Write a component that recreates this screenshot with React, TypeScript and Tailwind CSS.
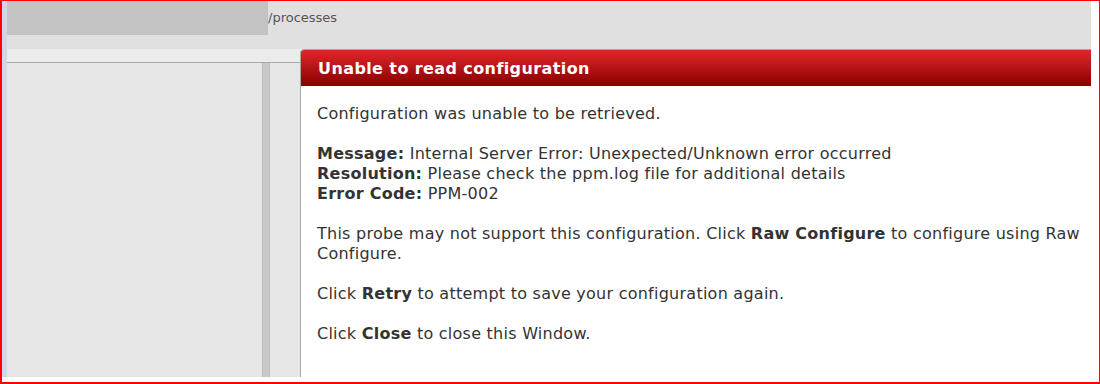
export default function App() {
  const font = { fontFamily: '"DejaVu Sans", Verdana, sans-serif' };

  return (
    <div className="w-[1100px] h-[384px] border-t border-l-2 border-r border-b-2 border-[#ff0000] bg-white" style={font}>
      <div className="flex h-[376px] w-[1089px]">
        <div className="w-[5px] shrink-0 bg-[#cdd7e6]" />
        <div className="flex flex-1 flex-col">
          <div className="flex h-[48px] shrink-0 items-start bg-[#e0e0e0]">
            <div className="h-[34px] w-[261px] bg-[#c3c3c3]" />
            <span className="mt-[9px] text-[13px] leading-[16px] text-[#555]">/processes</span>
          </div>
          <div className="flex flex-1">
            <div className="flex w-[293px] shrink-0 flex-col bg-[#ebebeb]">
              <div className="h-[13px] shrink-0" />
              <div className="flex flex-1 border-t border-[#a9a9a9]">
                <div className="w-[255px] bg-[#e6e6e6]" />
                <div className="w-[8px] border-x border-[#bdbdbd] bg-[#c9c9c9]" />
                <div className="flex-1 bg-[#e6e6e6]" />
              </div>
            </div>
            <div className="flex flex-1 flex-col overflow-hidden rounded-tl-[4px] border-t border-l border-[#a8a8a8] bg-white">
              <div className="flex h-[36px] shrink-0 items-center bg-gradient-to-b from-[#e02629] to-[#8a0000] px-[17px] pt-[1px]">
                <span className="text-[16px] font-bold tracking-[0.4px] text-white">Unable to read configuration</span>
              </div>
              <div className="flex flex-col gap-[20px] pl-[16px] pr-[4px] pt-[18px] text-[16px] leading-[20px] tracking-[0.25px] text-[#333]">
                <p>Configuration was unable to be retrieved.</p>
                <p>
                  <b>Message:</b> Internal Server Error: Unexpected/Unknown error occurred
                  <br />
                  <b>Resolution:</b> Please check the ppm.log file for additional details
                  <br />
                  <b>Error Code:</b> PPM-002
                </p>
                <p>
                  This probe may not support this configuration. Click <b>Raw Configure</b> to configure using Raw Configure.
                </p>
                <p>
                  Click <b>Retry</b> to attempt to save your configuration again.
                </p>
                <p>
                  Click <b>Close</b> to close this Window.
                </p>
              </div>
            </div>
          </div>
        </div>
      </div>
    </div>
  );
}
